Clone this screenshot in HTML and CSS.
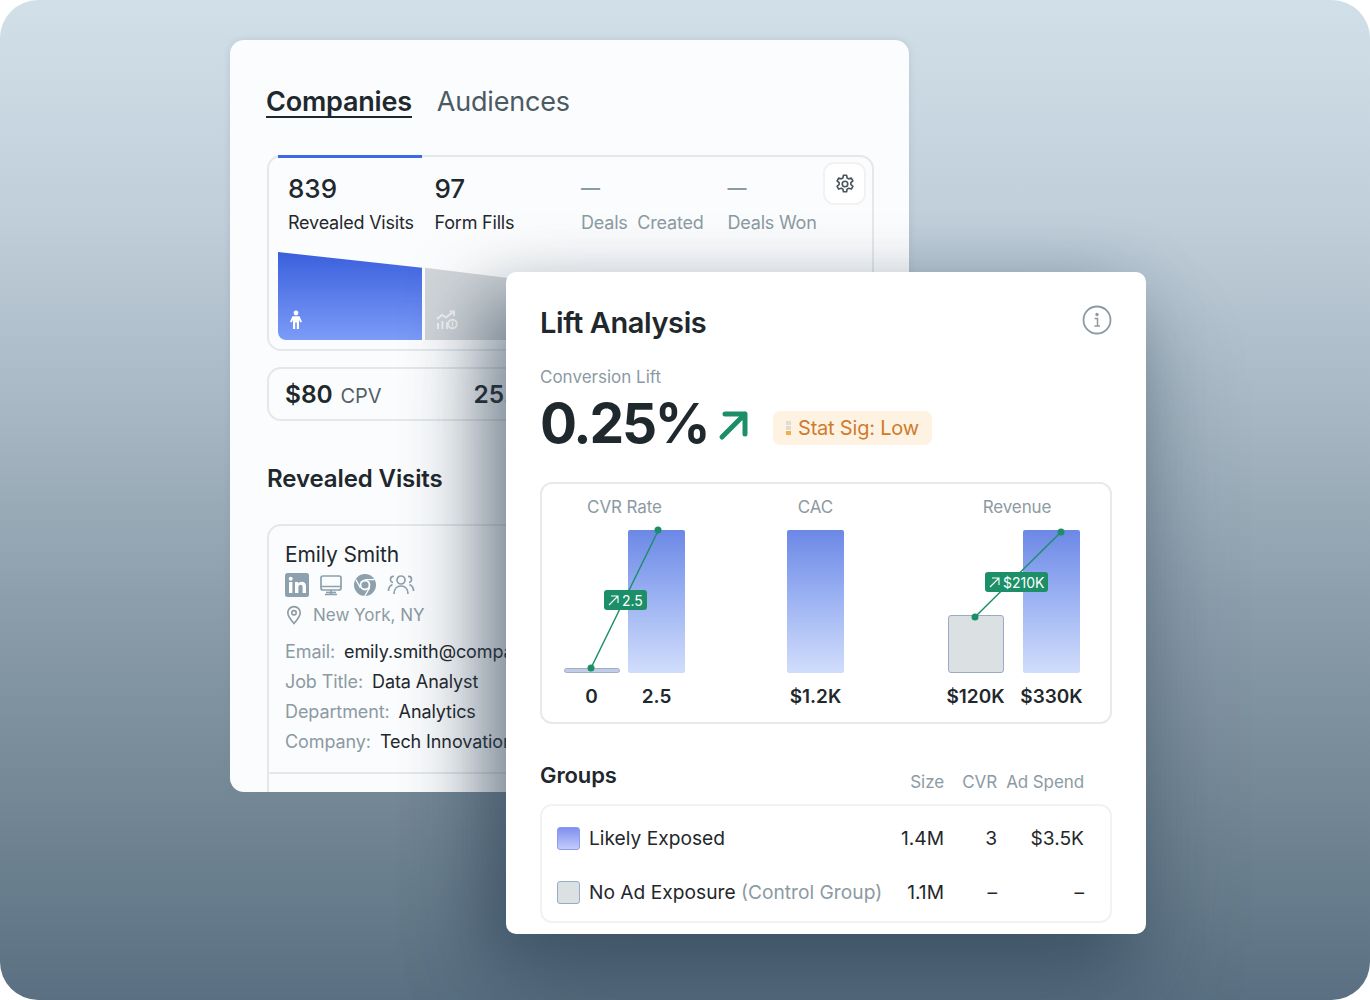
FILE: index.html
```html
<!DOCTYPE html>
<html lang="en">
<head>
<meta charset="utf-8">
<title>Lift Analysis</title>
<link rel="stylesheet" href="styles.css">
</head>
<body>
<div class="stage">
  <section class="back">
    <div class="tabs">
      <span class="tab active">Companies</span>
      <span class="tab">Audiences</span>
    </div>
    <div class="funnel">
      <div class="topbar"></div>
      <button class="gear" aria-label="Settings">
        <svg width="22" height="22" viewBox="0 0 24 24" fill="none" stroke="#48555d" stroke-width="1.800" stroke-linejoin="round"><path d="M10.3 2.5h3.4l.6 2.9 1.8 1 2.8-.9 1.7 3-2.2 2v2l2.2 2-1.7 3-2.8-.9-1.8 1-.6 2.9h-3.400l-.6-2.900-1.800-1-2.800.9-1.700-3 2.200-2v-2l-2.200-2 1.700-3 2.800.9 1.800-1z"/><circle cx="12" cy="12" r="3"/></svg>
      </button>
      <div class="metrics">
        <div class="metric"><b>839</b><span>Revealed Visits</span></div>
        <div class="metric"><b>97</b><span>Form Fills</span></div>
        <div class="metric off"><b>—</b><span>Deals&nbsp; Created</span></div>
        <div class="metric off"><b>—</b><span>Deals Won</span></div>
      </div>
      <div class="flow">
        <div class="flow-a">
          <svg width="14" height="20" viewBox="0 0 14 20" fill="#fff"><circle cx="7" cy="3" r="2.400"/><path d="M3.500 6.200h7l2.500 5.600-1.600.7-1.400-2.600V19H7.800v-6.500H6.200V19H4V9.900l-1.400 2.600L1 11.800z"/></svg>
        </div>
        <div class="flow-b">
          <svg width="22" height="20" viewBox="0 0 22 20" fill="none" stroke="#f2f4f5" stroke-width="2"><path d="M1 9l5-4 4 2.500L17 2"/><path d="M13.500 1.500h4.500v4.500"/><path d="M2 13v6M6.500 11v8M11 12v7"/><circle cx="16.500" cy="14" r="4.300"/><path d="M16.500 11.500v5" stroke-width="1.400"/></svg>
        </div>
        <div class="flow-c"></div>
      </div>
    </div>
    <div class="kpis">
      <span class="kpi"><b>$80</b> <span>CPV</span></span>
      <span class="kpi kpi2"><b>25.4%</b></span>
    </div>
    <h2 class="visits">Revealed Visits</h2>
    <div class="person">
      <div class="pname">Emily Smith</div>
      <div class="picons">
        <svg width="24" height="24" viewBox="0 0 24 24"><rect width="24" height="24" rx="2.500" fill="#8ca0ad"/><rect x="4" y="9" width="3.400" height="11" fill="#fff"/><circle cx="5.700" cy="5.800" r="2" fill="#fff"/><path d="M10 9h3.200v1.600c.7-1.100 1.900-1.900 3.500-1.900 3 0 4.300 1.800 4.300 5V20h-3.400v-5.600c0-1.700-.6-2.700-2-2.700s-2.200 1-2.200 2.700V20H10z" fill="#fff"/></svg>
        <svg width="24" height="24" viewBox="0 0 24 24" fill="none" stroke="#8ca0ad" stroke-width="1.700"><rect x="2" y="3" width="20" height="14" rx="2"/><path d="M2 13.500h20M12 17v4M6 21.500h12"/><path d="M7 19.500h10"/></svg>
        <svg width="24" height="24" viewBox="0 0 24 24"><circle cx="12" cy="12" r="11" fill="#8ca0ad"/><circle cx="12" cy="12" r="5.400" fill="#fff"/><circle cx="12" cy="12" r="3.600" fill="#8ca0ad"/><path d="M12 6.600h9.500M7.300 14.700L2.800 6.500M16.700 14.700l-5.200 8.800" stroke="#fff" stroke-width="1.300"/></svg>
        <svg width="28" height="24" viewBox="0 0 28 24" fill="none" stroke="#8ca0ad" stroke-width="1.700"><circle cx="14" cy="7" r="4"/><path d="M7 21c0-5 3-8 7-8s7 3 7 8"/><path d="M7 3.500a3 3 0 0 0-1 6M21 3.500a3 3 0 0 1 1 6M1.500 18c0-3.500 1.500-5.500 4-6.500M26.500 18c0-3.500-1.500-5.500-4-6.500"/></svg>
      </div>
      <div class="ploc">
        <svg width="16" height="20" viewBox="0 0 16 20" fill="none" stroke="#8c9aa3" stroke-width="1.600"><path d="M8 18.500C4 14 1.800 11 1.800 7.800a6.200 6.200 0 0 1 12.400 0C14.200 11 12 14 8 18.500z"/><circle cx="8" cy="7.800" r="2.200"/></svg>
        <span>New York, NY</span>
      </div>
      <dl class="facts">
        <div><dt>Email:</dt><dd>emily.smith@company.com</dd></div>
        <div><dt>Job Title:</dt><dd>Data Analyst</dd></div>
        <div><dt>Department:</dt><dd>Analytics</dd></div>
        <div><dt>Company:</dt><dd>Tech Innovations Inc.</dd></div>
      </dl>
      <div class="pfoot"></div>
    </div>
  </section>

  <section class="front">
    <header class="fhead">
      <h1>Lift Analysis</h1>
      <svg width="30" height="30" viewBox="0 0 30 30" fill="none" stroke="#8c9aa3" stroke-width="1.800"><circle cx="15" cy="15" r="13.500"/><path d="M12.500 13.500h3V21M12.500 21h5.500" stroke-width="1.500"/><circle cx="15" cy="9.500" r=".8" fill="#8c9aa3"/></svg>
    </header>
    <div class="lift-label">Conversion Lift</div>
    <div class="lift">
      <span class="lift-num">0.25%</span>
      <svg class="lift-arrow" width="32" height="32" viewBox="0 0 32 32" fill="none" stroke="#1c8f69" stroke-width="5" stroke-linecap="round" stroke-linejoin="round"><path d="M4 28L27 5M7 5h20v20"/></svg>
      <span class="badge"><i class="sig"><u></u><u></u><u class="on"></u></i>Stat Sig: Low</span>
    </div>
    <div class="charts">
      <div class="cgroup g1">
        <div class="ctitle">CVR Rate</div>
        <div class="bars">
          <div class="barcol narrow"><div class="bar thin"></div></div>
          <div class="barcol"><div class="bar blue"></div></div>
          <svg class="trend" viewBox="0 0 121 150" width="121" height="150"><path d="M27 139L94 2" stroke="#1c8f69" stroke-width="1.500"/><circle cx="27" cy="139" r="3.500" fill="#1c8f69"/><circle cx="94" cy="1" r="3.500" fill="#1c8f69"/></svg>
          <span class="tag t1"><svg width="11" height="11" viewBox="0 0 11 11" fill="none" stroke="#fff" stroke-width="1.100"><path d="M1 10L10 1M3 1h7v7"/></svg>2.5</span>
        </div>
        <div class="vals"><b class="narrow">0</b><b>2.5</b></div>
      </div>
      <div class="cgroup g2">
        <div class="ctitle">CAC</div>
        <div class="bars">
          <div class="barcol"><div class="bar blue"></div></div>
        </div>
        <div class="vals"><b>$1.2K</b></div>
      </div>
      <div class="cgroup g3">
        <div class="ctitle">Revenue</div>
        <div class="bars">
          <div class="barcol narrow"><div class="bar grey"></div></div>
          <div class="barcol"><div class="bar blue"></div></div>
          <svg class="trend" viewBox="0 0 132 150" width="132" height="150"><path d="M27 88L113 3" stroke="#1c8f69" stroke-width="1.500"/><circle cx="27" cy="88" r="3.500" fill="#1c8f69"/><circle cx="113" cy="3" r="3.500" fill="#1c8f69"/></svg>
          <span class="tag t2"><svg width="11" height="11" viewBox="0 0 11 11" fill="none" stroke="#fff" stroke-width="1.100"><path d="M1 10L10 1M3 1h7v7"/></svg>$210K</span>
        </div>
        <div class="vals"><b class="narrow">$120K</b><b>$330K</b></div>
      </div>
    </div>
    <div class="ghead">
      <h3>Groups</h3>
      <span>Size</span><span>CVR</span><span>Ad Spend</span>
    </div>
    <div class="gtable">
      <div class="grow">
        <span class="gname"><i class="sw swb"></i>Likely Exposed</span>
        <span>1.4M</span><span>3</span><span>$3.5K</span>
      </div>
      <div class="grow">
        <span class="gname"><i class="sw swg"></i>No Ad Exposure&nbsp;<em>(Control Group)</em></span>
        <span>1.1M</span><span>–</span><span>–</span>
      </div>
    </div>
  </section>
</div>
</body>
</html>
```
FILE: styles.css
```css
* { box-sizing: border-box; }
html, body { margin: 0; padding: 0; background: #fff; }
body { font-family: "Inter", "Liberation Sans", sans-serif; color: #1f282d; }
h1, h2, h3, dl, dd { margin: 0; }
.stage {
  position: relative;
  width: 1370px;
  height: 1000px;
  border-radius: 38px;
  overflow: hidden;
  background: linear-gradient(180deg, #d1e0e8 0%, #bfced9 22%, #a6b6c2 42%, #8c9eac 60%, #738795 80%, #5a7082 100%);
}
.back {
  position: absolute;
  left: 230px;
  top: 40px;
  width: 679px;
  height: 752px;
  padding: 36px 35px 0 37px;
  background: #fbfcfd;
  border-radius: 14px;
  overflow: hidden;
  box-shadow: 0 0 6px rgba(120, 140, 155, .25);
}
.tabs { display: flex; gap: 25px; height: 44px; margin-left: -1px; }
.tab { font-size: 27px; line-height: 52px; color: #4b5a62; height: 42px; letter-spacing: -.2px; }
.tab.active { font-weight: 600; color: #1f282d; border-bottom: 2px solid #1f282d; }
.funnel {
  position: relative;
  margin-top: 35px;
  width: 607px;
  height: 196px;
  border: 2px solid #e4e8eb;
  border-radius: 14px;
  padding: 0 9px;
}
.topbar { position: absolute; left: 9px; top: -2px; width: 144px; height: 3px; background: #3f68e6; }
.gear {
  position: absolute;
  left: 554px;
  top: 5px;
  width: 43px;
  height: 43px;
  padding: 0;
  display: flex;
  align-items: center;
  justify-content: center;
  background: #fff;
  border: 2px solid #f0f2f4;
  border-radius: 11px;
}
.metrics { display: flex; padding: 16px 0 0 10px; }
.metric { flex: none; width: 146.500px; display: flex; flex-direction: column; }
.metric b { font-size: 26px; line-height: 32px; font-weight: 500; height: 32px; }
.metric span { font-size: 18px; line-height: 24px; margin-top: 6px; white-space: nowrap; letter-spacing: -.2px; }
.off b { font-size: 19px; font-weight: 600; }
.off b, .off span { color: #8c9aa3; }
.flow { display: flex; gap: 3px; margin-top: 17px; height: 88px; width: 587px; }
.flow-a, .flow-b, .flow-c { height: 88px; display: flex; align-items: flex-end; padding: 0 0 10px 11px; }
.flow-a {
  width: 144px;
  background: linear-gradient(180deg, #3a5fdc 0%, #7c9cf8 100%);
  clip-path: polygon(0 0, 100% 18%, 100% 100%, 0 100%);
  border-bottom-left-radius: 8px;
}
.flow-b {
  width: 144px;
  background: #d0d5d9;
  clip-path: polygon(0 18%, 100% 38%, 100% 100%, 0 100%);
}
.flow-c { width: 144px; background: #d5dadd; clip-path: polygon(0 38%, 100% 48%, 100% 100%, 0 100%); }
.kpis {
  display: flex;
  align-items: center;
  margin-top: 16px;
  width: 607px;
  height: 54px;
  padding: 0 0 0 16px;
  border: 2px solid #e4e8eb;
  border-radius: 14px;
}
.kpi { font-size: 20px; white-space: nowrap; }
.kpi b { font-size: 24.500px; font-weight: 600; }
.kpi span { color: #52616a; margin-left: 2px; font-size: 20px; }
.kpi2 { margin-left: 92px; }
.visits { font-size: 24px; line-height: 30px; font-weight: 600; margin-top: 43px; letter-spacing: -.1px; }
.person {
  margin-top: 30px;
  width: 607px;
  height: 300px;
  padding: 15px 16px 0;
  border: 2px solid #e4e8eb;
  border-radius: 14px;
}
.pname { font-size: 21px; line-height: 28px; letter-spacing: -.1px; }
.picons { display: flex; align-items: center; gap: 10px; height: 24px; margin-top: 4px; }
.ploc { display: flex; align-items: center; gap: 11px; height: 24px; margin-top: 6px; padding-left: 1px; color: #8c9aa3; font-size: 17px; }
.facts { margin-top: 10px; width: 300px; }
.facts div { display: flex; gap: 9px; font-size: 18px; line-height: 30px; white-space: nowrap; letter-spacing: -.1px; }
.facts dt { color: #8c9aa3; }
.pfoot { margin: 15px -16px 0; border-top: 2px solid #e4e8eb; }
.front {
  position: absolute;
  left: 506px;
  top: 272px;
  width: 640px;
  height: 662px;
  padding: 27px 34px 0 34px;
  background: #fff;
  border-radius: 10px;
  box-shadow: -24px 26px 70px rgba(45, 65, 85, .55), 0 60px 100px rgba(40, 60, 80, .3);
}
.fhead { display: flex; justify-content: space-between; align-items: flex-start; height: 49px; padding-top: 3px; }
.fhead svg { margin-top: 3px; }
.fhead h1 { font-size: 29px; line-height: 42px; font-weight: 600; letter-spacing: -.4px; }
.lift-label { margin-top: 17px; font-size: 17px; line-height: 24px; color: #8c9aa3; }
.lift { display: flex; align-items: center; height: 69px; margin-top: 0; }
.lift-num { font-size: 55px; line-height: 69px; font-weight: 700; letter-spacing: -2.200px; width: 178px; }
.lift-arrow { margin-top: 2px; }
.badge {
  display: flex;
  align-items: center;
  margin-left: 23px;
  margin-top: 8px;
  height: 34px;
  padding: 0 13px;
  background: #fef3e2;
  border-radius: 7px;
  font-size: 20px;
  color: #cf7b2e;
  letter-spacing: -.2px;
}
.sig { display: flex; flex-direction: column; gap: 1px; width: 5px; margin-right: 7px; }
.sig u { display: block; height: 4px; background: #dfdcd5; }
.sig u.on { background: #f3ae4c; }
.charts {
  display: flex;
  justify-content: space-between;
  margin-top: 24px;
  height: 242px;
  padding: 0 30px 0 22px;
  border: 2px solid #e6eaed;
  border-radius: 12px;
}
.cgroup { display: flex; flex-direction: column; align-items: stretch; }
.g1 { width: 121px; }
.g2 { width: 57px; margin-left: -2px; }
.g3 { width: 132px; }
.ctitle { font-size: 17px; line-height: 22px; color: #8c9aa3; margin-top: 12px; margin-bottom: 12px; white-space: nowrap; letter-spacing: -.1px; display: flex; justify-content: center; }
.g3 .ctitle { padding-left: 6px; }
.bars { position: relative; display: flex; justify-content: space-between; align-items: flex-end; height: 143px; }
.barcol { width: 57px; height: 143px; display: flex; align-items: flex-end; }
.barcol.narrow { width: 56px; }
.bar { width: 100%; border-radius: 2px; }
.bar.blue { height: 143px; background: linear-gradient(180deg, #6c88e6 0%, #99b0f2 45%, #d1ddfb 100%); }
.bar.thin { height: 5px; background: #c1cde6; border: 1px solid #9fb0c8; border-radius: 3px; }
.bar.grey { height: 58px; background: #dbe0e3; border: 1.500px solid #9aabc4; border-radius: 3px; }
.trend { position: absolute; left: 0; top: -1px; overflow: visible; }
.tag {
  position: absolute;
  display: flex;
  align-items: center;
  gap: 3px;
  height: 20px;
  padding: 0 4px;
  background: #1c8f69;
  border-radius: 3px;
  color: #fff;
  font-size: 14px;
  white-space: nowrap;
}
.t1 { left: 40px; top: 60px; }
.t2 { left: 37px; top: 42px; }
.vals { display: flex; justify-content: space-between; margin-top: 12px; }
.vals b { width: 57px; font-size: 19px; line-height: 24px; font-weight: 600; white-space: nowrap; display: flex; justify-content: center; }
.vals b.narrow { width: 55px; }
.ghead {
  display: grid;
  grid-template-columns: 1fr 60px 53px 87px;
  align-items: end;
  margin-top: 36px;
  padding-right: 28px;
  height: 33px;
  color: #8c9aa3;
  font-size: 17px;
  text-align: right;
  line-height: 22px;
  letter-spacing: -.1px;
}
.ghead h3 { font-size: 22px; line-height: 30px; font-weight: 600; color: #1f282d; text-align: left; align-self: start; }
.gtable {
  margin-top: 11px;
  height: 119px;
  padding: 5px 26px 0 15px;
  border: 2px solid #f0f2f4;
  border-radius: 12px;
}
.grow {
  display: grid;
  grid-template-columns: 1fr 60px 53px 87px;
  align-items: center;
  height: 54px;
  font-size: 19.200px;
  text-align: right;
  white-space: nowrap;
}
.gname { display: flex; align-items: center; text-align: left; }
.gname em { font-style: normal; color: #8c9aa3; }
.sw { width: 23px; height: 23px; margin-right: 9px; border-radius: 3px; }
.swb { background: linear-gradient(180deg, #7f90ee 0%, #c3ccfa 100%); border: 1px solid #8c9bea; }
.swg { background: #dbe0e3; border: 1.500px solid #9aabc4; }
```
